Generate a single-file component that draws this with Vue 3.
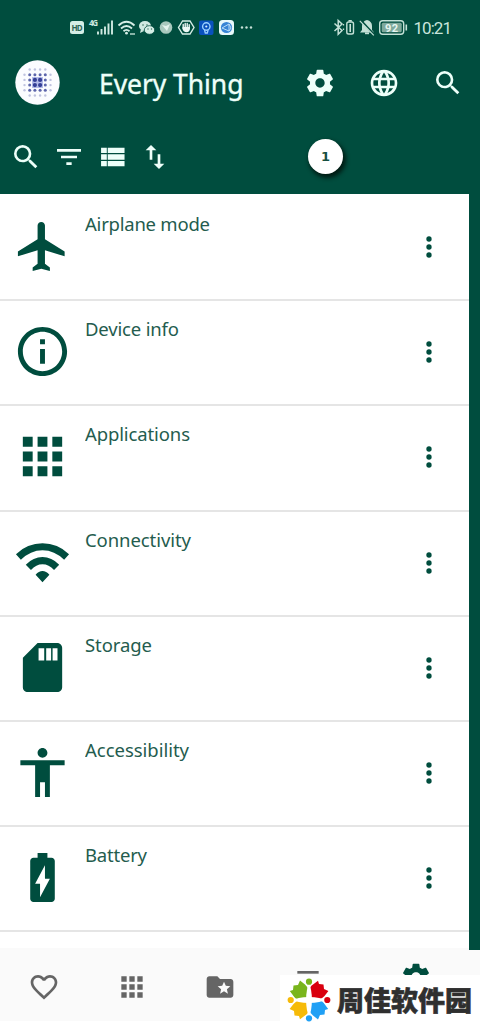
<script setup>
const rows = [
  { label: 'Airplane mode', width: 125, icon: 'M21 16v-2l-8-5V3.5c0-.83-.67-1.5-1.5-1.5S10 2.67 10 3.5V9l-8 5v2l8-2.5V19l-2 1.5V22l3.5-1 3.5 1v-1.5L13 19v-5.5l8 2.5z' },
  { label: 'Device info', width: 94, icon: 'M11 7h2v2h-2zm0 4h2v6h-2zm1-9C6.48 2 2 6.48 2 12s4.48 10 10 10 10-4.48 10-10S17.52 2 12 2zm0 18c-4.41 0-8-3.59-8-8s3.59-8 8-8 8 3.59 8 8-3.59 8-8 8z' },
  { label: 'Applications', width: 105, icon: 'M4 8h4V4H4zm6 12h4v-4h-4zm-6 0h4v-4H4zm0-6h4v-4H4zm6 0h4v-4h-4zm6-10v4h4V4zm-6 4h4V4h-4zm6 6h4v-4h-4zm0 6h4v-4h-4z' },
  { label: 'Connectivity', width: 106, icon: 'M12 4.2Q5.900 4.200 1.200 8.600L3.200 10.900Q7.100 7 12 7T20.800 10.900L22.800 8.600Q18.100 4.200 12 4.200zM12 9.800Q8.300 9.800 5.200 12.900L7.300 15Q9.400 12.700 12 12.700T16.700 15L18.800 12.900Q15.700 9.800 12 9.800zM12 15.500Q10.500 15.500 9.200 17L12 20 14.800 17Q13.500 15.500 12 15.500z' },
  { label: 'Storage', width: 67, icon: 'M18 2h-8L4.02 8 4 20c0 1.1.9 2 2 2h12c1.1 0 2-.9 2-2V4c0-1.1-.9-2-2-2zm-5.300 7.200h-2.300V4.200h2.300zm2.800 0h-2V4.200h2zm2.600 0h-2V4.200h2z' },
  { label: 'Accessibility', width: 104, icon: 'M12 2c1.1 0 2 .9 2 2s-.9 2-2 2-2-.9-2-2 .9-2 2-2zm9 7h-6v13h-2v-6h-2v6H9V9H3V7h18z' },
  { label: 'Battery', width: 62, icon: 'M15.67 4H14V2h-4v2H8.33C7.6 4 7 4.6 7 5.33v15.33C7 21.4 7.6 22 8.33 22h7.33c.74 0 1.34-.6 1.34-1.33V5.33C17 4.6 16.4 4 15.67 4zM11 20v-5.5H9L13 7v5.5h2z' },
]
const search = 'M15.5 14h-.79l-.28-.27A6.47 6.47 0 0 0 16 9.5 6.5 6.5 0 1 0 9.5 16c1.61 0 3.09-.59 4.23-1.57l.27.28v.79l5 4.99L20.49 19zm-6 0C7.01 14 5 11.99 5 9.5S7.01 5 9.5 5 14 7.01 14 9.5 11.99 14 9.5 14z'
const gear = 'M19.43 12.98c.04-.32.07-.64.07-.98s-.03-.66-.07-.98l2.11-1.65c.19-.15.24-.42.12-.64l-2-3.46c-.12-.22-.39-.3-.61-.22l-2.49 1c-.52-.4-1.08-.73-1.69-.98l-.38-2.65C14.46 2.18 14.25 2 14 2h-4c-.25 0-.46.18-.49.42l-.38 2.65c-.61.25-1.17.59-1.69.98l-2.49-1c-.23-.09-.49 0-.61.22l-2 3.46c-.13.22-.07.49.12.64l2.11 1.65c-.04.32-.07.65-.07.98s.03.66.07.98l-2.11 1.65c-.19.15-.24.42-.12.64l2 3.46c.12.22.39.3.61.22l2.49-1c.52.4 1.08.73 1.69.98l.38 2.65c.03.24.24.42.49.42h4c.25 0 .46-.18.49-.42l.38-2.65c.61-.25 1.17-.59 1.69-.98l2.49 1c.23.09.49 0 .61-.22l2-3.46c.12-.22.07-.49-.12-.64zM12 15.5c-1.93 0-3.5-1.57-3.5-3.5s1.57-3.5 3.5-3.5 3.5 1.57 3.5 3.5-1.57 3.5-3.5 3.5z'
const globe = 'M11.99 2C6.47 2 2 6.48 2 12s4.47 10 9.99 10C17.52 22 22 17.52 22 12S17.52 2 11.99 2zm6.93 6h-2.95a15.65 15.65 0 0 0-1.38-3.56A8.03 8.03 0 0 1 18.92 8zM12 4.04c.83 1.2 1.48 2.53 1.91 3.96h-3.82c.43-1.43 1.08-2.76 1.91-3.96zM4.26 14C4.1 13.36 4 12.69 4 12s.1-1.36.26-2h3.38c-.08.66-.14 1.32-.14 2s.06 1.34.14 2zm.82 2h2.95c.32 1.25.78 2.45 1.38 3.56A7.99 7.99 0 0 1 5.08 16zm2.95-8H5.08a7.99 7.99 0 0 1 4.33-3.56A15.65 15.65 0 0 0 8.03 8zM12 19.96c-.83-1.2-1.48-2.53-1.91-3.96h3.82A14.1 14.1 0 0 1 12 19.96zM14.34 14H9.66c-.09-.66-.16-1.32-.16-2s.07-1.35.16-2h4.68c.09.65.16 1.32.16 2s-.07 1.34-.16 2zm.25 5.56c.6-1.11 1.06-2.31 1.38-3.56h2.95a8.03 8.03 0 0 1-4.33 3.56zM16.36 14c.08-.66.14-1.32.14-2s-.06-1.34-.14-2h3.38c.16.64.26 1.31.26 2s-.1 1.36-.26 2z'
const tools = [
  { name: 'search', d: search },
  { name: 'filter', d: 'M10 18h4v-2h-4zM3 6v2h18V6zm3 7h12v-2H6z' },
  { name: 'list', d: 'M3.8 14h4.300v-4h-4.300zm0 5h4.300v-4h-4.300zm0-10h4.300V5h-4.300zm5 5h12.600v-4H8.800zm0 5h12.600v-4H8.800zm0-14v4h12.600V5z' },
  { name: 'swap', d: 'M16 17.01V10h-2v7.01h-3L15 21l4-3.99zM9 3 5 6.99h3V14h2V6.99h3z' },
]
const petals = ['#79b51c', '#d9000f', '#20a0f5', '#f6ba08']
const dots = []
for (let r = 0; r < 6; r++) {
  for (let c = 0; c < 6; c++) {
    const edge = r === 0 || r === 5 || c === 0 || c === 5
    const corner = (r === 0 || r === 5) && (c === 0 || c === 5)
    if (corner) continue
    const mid = (r === 2 || r === 3) && (c === 2 || c === 3)
    dots.push({ x: 9.5 + c * 5.2, y: 9.5 + r * 5.2, r: mid ? 2.1 : edge ? 1.2 : 1.5, o: edge ? 0.3 : mid ? 1 : 0.8 })
  }
}
</script>

<template>
  <div class="screen">
    <header>
      <div class="status">
        <svg width="190" height="24" viewBox="70 16 190 24">
          <rect x="70" y="21" width="14" height="13" rx="2.5" fill="#d5eee6" />
          <text x="71.6" y="31" class="hd" textLength="11">HD</text>
          <text x="89" y="26" class="net" textLength="9">4G</text>
          <path d="M98 31.5v3M101.500 29v5.500M105 26.500v8M108.500 23.500v11M112 20.500v14" stroke="#cfe9e1" stroke-width="1.900" fill="none" />
          <g fill="none" stroke="#d5eee6" stroke-width="1.800">
            <path d="M118.500 25.500q8-7.500 16 0M121 28.500q5.500-5 11 0M123.500 31.200q3-2.600 6 0" />
          </g>
          <circle cx="126.500" cy="33.200" r="1.400" fill="#d5eee6" />
          <path d="M130 34h5" stroke="#b5d6cb" stroke-width="1.500" />
          <ellipse cx="145" cy="26" rx="6" ry="5" fill="#cfe9e1" />
          <path d="m141 29-1 4 4-2z" fill="#cfe9e1" />
          <ellipse cx="149.500" cy="30" rx="5.200" ry="4.300" fill="#d5eee6" stroke="#004d3e" stroke-width=".8" />
          <g fill="#39705f"><circle cx="143" cy="25" r=".8" /><circle cx="147" cy="25" r=".8" /><circle cx="148" cy="29" r=".7" /><circle cx="151.500" cy="29" r=".7" /></g>
          <circle cx="166" cy="27.500" r="6.300" fill="#a9c9be" />
          <path d="m162 25 4 1 4-2-3 7z" fill="#e4f4ee" />
          <path d="m182.500 21-4 6.500 4 6.500h7.500l4-6.500-4-6.500z" fill="none" stroke="#d5eee6" stroke-width="1.400" />
          <path d="M183.200 24.500v4M185.200 23.500v5M187.200 23.500v5M189.200 24.800v4" stroke="#edf8f5" stroke-width="1.400" stroke-linecap="round" />
          <path d="M182.500 27h7.400v2q-.6 3.200-3.400 3.200t-4-3.200z" fill="#edf8f5" />
          <rect x="199" y="20.500" width="14.500" height="14.500" rx="2" fill="#0a51bd" />
          <circle cx="206.300" cy="26.500" r="3.700" fill="none" stroke="#9bd0ff" stroke-width="1.400" />
          <circle cx="206.300" cy="26.500" r="1.100" fill="#d9edff" />
          <path d="m204.500 30 .8 3h2l.8-3" fill="none" stroke="#9bd0ff" stroke-width="1.300" />
          <rect x="219" y="20" width="15" height="15" rx="3.500" fill="#e8f7fa" />
          <circle cx="226.500" cy="27.500" r="5.600" fill="#3884d5" />
          <path d="m222 28 7-4v7zm7-4 2 4-2 3" fill="none" stroke="#b9dcf8" stroke-width="1" />
          <g fill="#c6e0d7"><circle cx="242" cy="27.500" r="1.200" /><circle cx="246.500" cy="27.500" r="1.200" /><circle cx="251" cy="27.500" r="1.200" /></g>
        </svg>
        <svg width="122" height="24" viewBox="332 16 122 24">
          <path d="m334.500 23.500 7.500 7-3.800 3.700V20.500l3.800 3.500-7.500 7" fill="none" stroke="#c4e1d7" stroke-width="1.500" />
          <path d="M343.500 24v1.500m0 3v1.500" stroke="#c4e1d7" stroke-width="1.300" />
          <rect x="346.800" y="22" width="6.700" height="12" rx="1.800" fill="none" stroke="#c4e1d7" stroke-width="1.400" />
          <path d="M348.500 20.700h3.300M350.200 24v8" stroke="#c4e1d7" stroke-width="1.600" />
          <path d="M367 20q5 1.300 5 6v4l2 2.500h-14l2-2.500v-4q0-4.700 5-6z" fill="#c4e1d7" />
          <path d="M365 33.300h4" stroke="#c4e1d7" stroke-width="1.800" />
          <path d="m360.500 20 14 15" stroke="#004d3e" stroke-width="2" />
          <path d="m359.800 20.800 14 14.500" stroke="#c4e1d7" stroke-width="1.200" />
          <rect x="379.700" y="20.700" width="24" height="13.600" rx="3" fill="none" stroke="#c4e1d7" stroke-width="1.400" />
          <rect x="381.700" y="22.700" width="20" height="9.600" rx="1.500" fill="#7ea99b" />
          <path d="M406.300 24.500v6" stroke="#c4e1d7" stroke-width="1.600" />
          <text x="385" y="31.500" class="charge" textLength="13">92</text>
          <text x="413.500" y="34.300" class="clock" textLength="38.500">10:21</text>
        </svg>
      </div>
      <div class="appbar">
        <svg width="45" height="45" viewBox="0 0 45 45">
          <circle cx="22.500" cy="22.500" r="22.200" fill="#fbfcff" />
          <rect x="17" y="17" width="11" height="11" fill="#b5bce9" />
          <circle v-for="(p, i) in dots" :key="i" :cx="p.x" :cy="p.y" :r="p.r" :opacity="p.o" fill="#353f96" />
        </svg>
        <svg class="title" width="146" height="40"><text x="0" y="27" textLength="144.500">Every Thing</text></svg>
        <div class="actions">
          <svg v-for="(d, i) in [gear, globe, search]" :key="i" width="32" height="32" viewBox="0 0 24 24"><path :d="d" /></svg>
        </div>
      </div>
      <div class="toolbar">
        <svg v-for="t in tools" :key="t.name" width="32" height="32" viewBox="0 0 24 24"><path :d="t.d" /></svg>
        <div class="count">1</div>
      </div>
    </header>
    <main>
      <div class="list">
        <div v-for="row in rows" :key="row.label" class="row">
          <svg class="icon" viewBox="0 0 24 24"><path :d="row.icon" /></svg>
          <svg class="label" height="30" width="140"><text x="0" y="21" :textLength="row.width">{{ row.label }}</text></svg>
          <svg class="more" viewBox="0 0 24 24"><circle cx="12" cy="6" r="2" /><circle cx="12" cy="12" r="2" /><circle cx="12" cy="18" r="2" /></svg>
        </div>
      </div>
    </main>
    <nav>
      <svg viewBox="0 0 24 24"><path d="M16.500 3c-1.740 0-3.410.81-4.500 2.090C10.910 3.810 9.240 3 7.500 3 4.420 3 2 5.420 2 8.500c0 3.780 3.400 6.860 8.550 11.540L12 21.350l1.450-1.320C18.600 15.360 22 12.280 22 8.500 22 5.420 19.580 3 16.500 3zm-4.400 15.550-.1.100-.1-.1C7.140 14.240 4 11.390 4 8.500 4 6.500 5.500 5 7.500 5c1.540 0 3.040.99 3.570 2.360h1.870C13.460 5.990 14.960 5 16.500 5c2 0 3.500 1.500 3.500 3.500 0 2.890-3.140 5.740-7.900 10.050z" /></svg>
      <svg viewBox="0 0 24 24"><path :d="rows[2].icon" /></svg>
      <svg viewBox="0 0 24 24"><path d="M20 6h-8l-2-2H4c-1.100 0-1.990.9-1.990 2L2 18c0 1.100.9 2 2 2h16c1.100 0 2-.9 2-2V8c0-1.100-.9-2-2-2zm-2.060 11L15 15.280 12.060 17l.78-3.330-2.590-2.240 3.410-.29L15 8l1.340 3.140 3.410.29-2.590 2.240z" /></svg>
      <svg viewBox="0 0 24 24"><path d="M4 0h16v2H4z" /></svg>
      <svg class="active" viewBox="0 0 24 24"><path :d="gear" /></svg>
    </nav>
    <div class="brand">
      <svg width="44" height="44" viewBox="0 0 44 44">
        <g v-for="(color, i) in petals" :key="color" :fill="color" :transform="`rotate(${i * 90} 22 22)`">
          <circle cx="22" cy="3.700" r="3.100" />
          <path d="M2.800 13 6 12 6.500 7.500 11 7 13 2.600 18 6.500Q21 9 21.800 13V21.800H13Q8 21 6.500 18z" />
        </g>
        <g fill="#fff">
          <ellipse cx="22" cy="22" rx="2.900" ry="14.300" />
          <ellipse cx="22" cy="22" rx="14.300" ry="2.900" />
        </g>
      </svg>
      <span>周佳软件园</span>
    </div>
  </div>
</template>

<style>
body { background: #fff; overflow: hidden; }
</style>
<style scoped>
.screen { position: relative; width: 480px; height: 1025px; overflow: hidden; background: #fff; font-family: "Noto Sans", "Noto Sans CJK SC", sans-serif; }
svg { display: block; flex: none; }
header { height: 194px; background: #004d3e; fill: #edfff9; box-sizing: border-box; }
.status { height: 40px; padding: 16px 26px 0 70px; display: flex; justify-content: space-between; box-sizing: border-box; }
.hd { font-size: 8px; font-weight: 700; fill: #2b6555; }
.net { font-size: 8px; font-weight: 700; fill: #cfe9e1; }
.charge { font-family: Roboto, sans-serif; font-size: 11px; font-weight: 700; fill: #e6f5f0; }
.clock { font-family: Roboto, sans-serif; font-size: 17px; fill: #c9e5dc; }
.appbar { height: 85px; display: flex; align-items: center; padding: 0 16px 0 15px; }
.title { margin-left: 39px; font-size: 26.500px; fill: #edfff9; stroke: #edfff9; stroke-width: .35px; margin-top: 8px; }
.actions { margin-left: auto; display: flex; gap: 32px; }
.toolbar { display: flex; gap: 11px; padding: 16px 10px 0; height: 69px; box-sizing: border-box; }
.count { width: 35px; height: 35px; margin: -2px 0 0 126px; border-radius: 50%; background: #fff; color: #174f40; box-shadow: 2px 3px 4px 1px #001c14; font: 700 13px/35px "DejaVu Sans", sans-serif; text-align: center; }
main { height: 756px; padding-right: 11px; background: #004d3e; overflow: hidden; box-sizing: border-box; }
.list { height: 756px; background: linear-gradient(#fff 754px, #fafafa 754px); padding-top: 2px; box-sizing: border-box; }
.row { height: 105.200px; display: flex; box-sizing: border-box; border-bottom: 2px solid #e5e5e5; padding-left: 13px; fill: #004d3e; }
.icon { width: 59px; height: 59px; margin-top: 21px; }
.label { margin: 14px 0 0 13px; font-size: 18.500px; fill: #245c4e; }
.more { width: 32px; height: 32px; margin: 35px 24px 0 auto; }
nav { height: 71px; background: #fafafa; display: flex; align-items: center; gap: 56px; padding: 3px 0 0 28px; box-sizing: border-box; fill: #656565; }
nav svg { width: 32px; height: 32px; }
nav .active { fill: #004d3e; margin: -20px 0 0 20px; }
.brand { position: absolute; left: 280px; top: 975px; width: 200px; height: 50px; background: #fff; display: flex; align-items: center; padding-left: 7px; box-sizing: border-box; }
.brand span { margin-left: 6px; color: #2f2f2f; font: 900 27px/40px "Noto Sans CJK SC", sans-serif; -webkit-text-stroke: .6px #2f2f2f; white-space: nowrap; }
</style>
